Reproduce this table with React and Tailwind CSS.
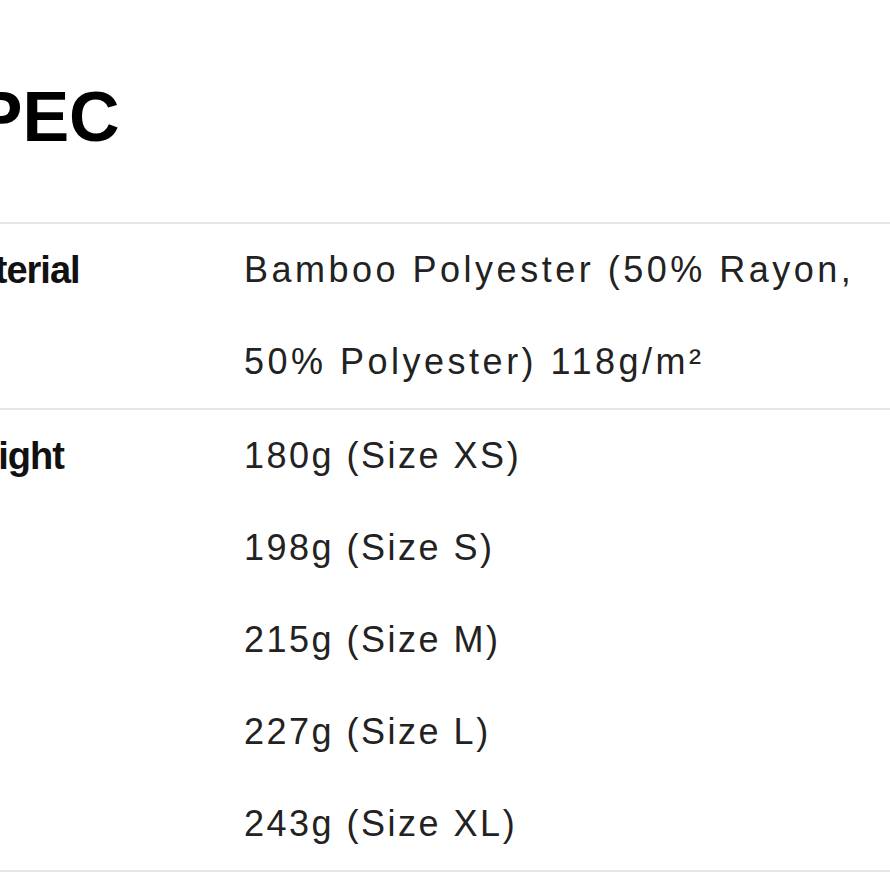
const rows = [
  {
    label: "Material",
    wide: true,
    values: ["Bamboo Polyester (50% Rayon,", "50% Polyester) 118g/m²"],
  },
  {
    label: "Weight",
    values: [
      "180g (Size XS)",
      "198g (Size S)",
      "215g (Size M)",
      "227g (Size L)",
      "243g (Size XL)",
    ],
  },
];

const SpecRow = ({ label, values, wide }) => {
  return (
    <div className="flex items-start border-b-2 border-[#e6e6e6]">
      <div className="w-[300px] shrink-0 -ml-[56px] text-[38px] font-bold leading-[92px] tracking-[-1px] text-[#111]">
        {label}
      </div>
      <div
        className={
          wide
            ? "flex flex-col text-[36px] leading-[92px] tracking-[3.5px] text-[#222] whitespace-nowrap"
            : "flex flex-col text-[36px] leading-[92px] tracking-[2.5px] text-[#222] whitespace-nowrap"
        }
      >
        {values.map((v) => (
          <span key={v}>{v}</span>
        ))}
      </div>
    </div>
  );
};

const App = () => {
  return (
    <div
      className="w-[890px] h-[890px] overflow-hidden bg-white"
      style={{ fontFamily: '"Liberation Sans", Arial, sans-serif' }}
    >
      <h1 className="pt-[82px] -ml-[71px] text-[70px] font-bold leading-[70px] text-black">
        SPEC
      </h1>
      <div className="mt-[70px] border-t-2 border-[#e6e6e6]">
        {rows.map((r) => (
          <SpecRow key={r.label} label={r.label} values={r.values} wide={r.wide} />
        ))}
      </div>
    </div>
  );
};

export default App;
